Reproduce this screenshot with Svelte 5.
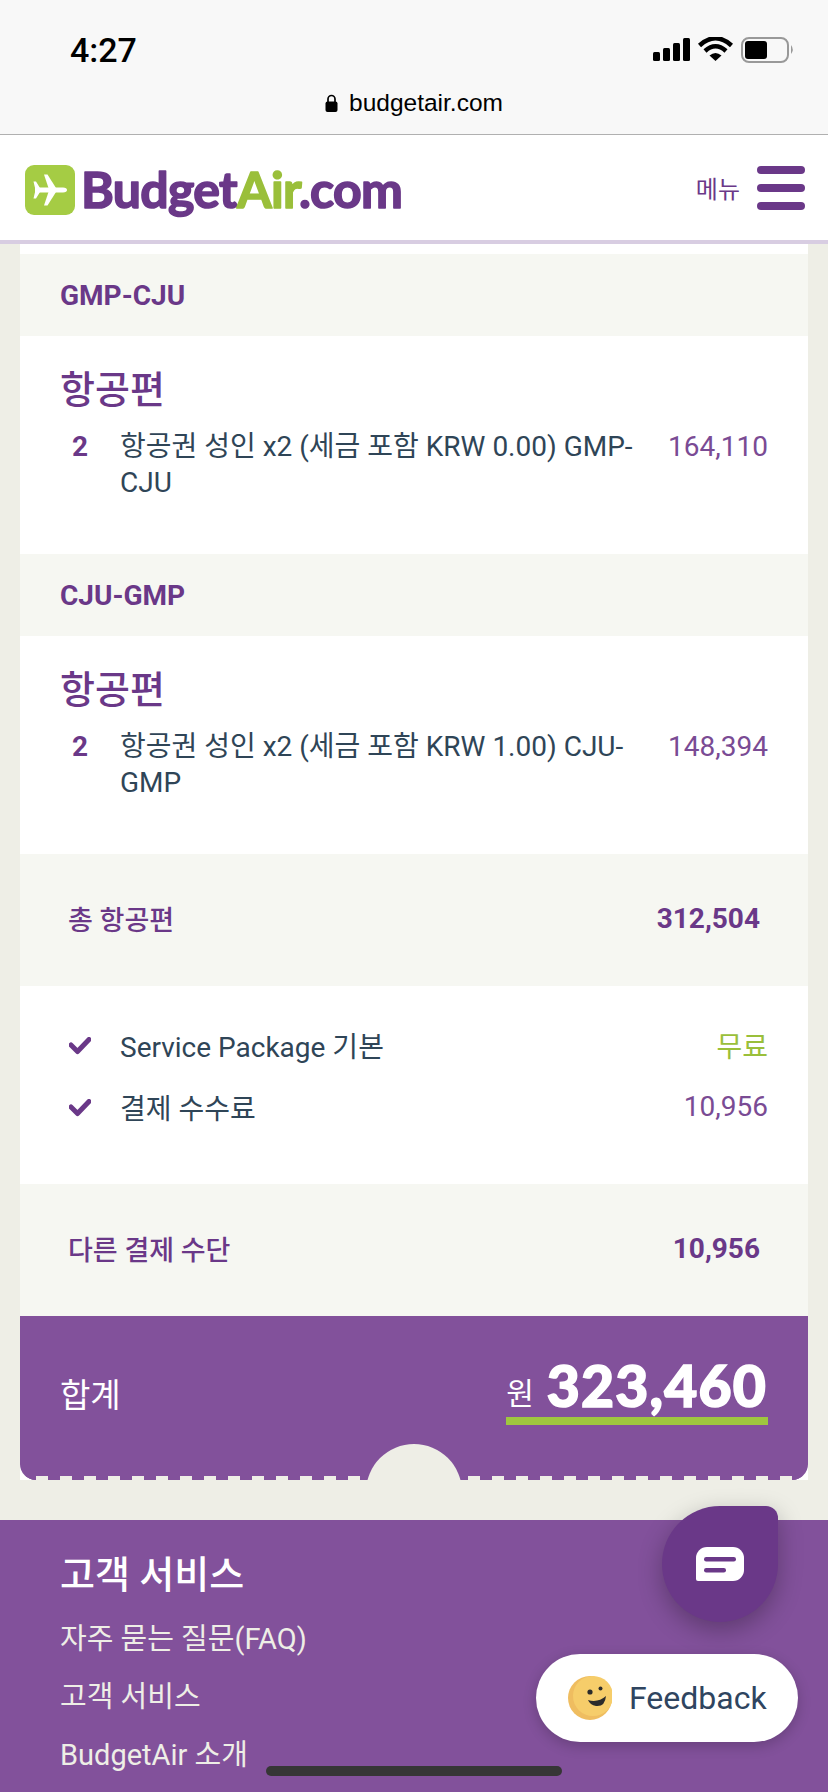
<script lang="ts">
    const legs = [
        { route: "GMP-CJU", text: "항공권 성인 x2 (세금 포함 KRW 0.00) GMP-CJU", price: "164,110" },
        { route: "CJU-GMP", text: "항공권 성인 x2 (세금 포함 KRW 1.00) CJU-GMP", price: "148,394" },
    ];
    const links = ["자주 묻는 질문(FAQ)", "고객 서비스", "BudgetAir 소개"];
</script>

<div class="page">
    <div class="chrome">
        <div class="status">
            <span class="time">4:27</span>
            <svg class="status-icons" width="142" height="26" viewBox="653 37 142 26">
                <rect x="653" y="52" width="7" height="9" rx="1.5" />
                <rect x="663" y="48" width="7" height="13" rx="1.5" />
                <rect x="673" y="43" width="7" height="18" rx="1.5" />
                <rect x="683" y="38" width="7" height="23" rx="1.5" />
                <path d="M699.5 45.5 Q715.5 31 731.5 45.5" class="wifi" />
                <path d="M705 51 Q715.5 41.5 726 51" class="wifi" />
                <path d="M715.5 61 L709.5 55.5 Q715.5 50.5 721.5 55.5 Z" />
                <rect x="742" y="38" width="46" height="24" rx="7" class="batt" />
                <rect x="745" y="41" width="22" height="18" rx="3" />
                <path d="M791 45 Q794.5 49.5 791 54 Z" fill="#999" />
            </svg>
        </div>
        <div class="url">
            <svg width="13" height="18" viewBox="0 0 13 18">
                <path d="M3 8V5a3.5 3.5 0 0 1 7 0v3" fill="none" stroke="#000" stroke-width="1.7" />
                <rect x="0.5" y="7.5" width="12" height="10.5" rx="2" />
            </svg>
            <span>budgetair.com</span>
        </div>
    </div>

    <header>
        <svg class="logo" width="384" height="58" viewBox="25 162 384 58">
            <rect x="25" y="162" width="50" height="50" rx="9" fill="#a5cc44" />
            <g transform="translate(25 162)" fill="#fff">
                <path d="M10 22.5H38Q42 22.8 42 25T38 27.5H10Z" />
                <path d="M8.5 16.5H11L15 23V27L11 33.5H8.5L10.5 25Z" />
                <path d="M19 9.5H22.5L31 23H23.5Z" />
                <path d="M19 40.5H22.5L31 27H23.5Z" />
            </g>
            <text x="81" y="205" textLength="322" class="logo-text"
                >Budget<tspan class="air">Air</tspan>.com</text
            >
        </svg>
        <div class="menu">
            <span>메뉴</span>
            <div class="burger"><i></i><i></i><i></i></div>
        </div>
    </header>

    <main class="card">
        {#each legs as leg}
            <div class="band route">{leg.route}</div>
            <section class="leg">
                <h2>항공편</h2>
                <div class="line">
                    <b>2</b>
                    <p>{leg.text}</p>
                    <span>{leg.price}</span>
                </div>
            </section>
        {/each}

        <div class="band sum">
            <span>총 항공편</span>
            <b>312,504</b>
        </div>

        <section class="extras">
            <div class="extra">
                <svg width="22" height="18" viewBox="0 0 22 18"><path d="M2 8l6.5 6.5L20 2.5" /></svg>
                <p>Service Package 기본</p>
                <span class="free">무료</span>
            </div>
            <div class="extra">
                <svg width="22" height="18" viewBox="0 0 22 18"><path d="M2 8l6.5 6.5L20 2.5" /></svg>
                <p>결제 수수료</p>
                <span>10,956</span>
            </div>
        </section>

        <div class="band sum">
            <span>다른 결제 수단</span>
            <b>10,956</b>
        </div>

        <div class="total">
            <span class="total-label">합계</span>
            <div class="amount">
                <span class="won">원</span>
                <span class="num">323,460</span>
            </div>
        </div>
    </main>

    <footer>
        <h3>고객 서비스</h3>
        {#each links as link}
            <a href="#top">{link}</a>
        {/each}
    </footer>

    <button class="chat" aria-label="chat">
        <svg width="48" height="34" viewBox="0 0 48 34">
            <path d="M11 0H37A11 11 0 0 1 48 11V23A11 11 0 0 1 37 34H2Q0 34 0 32V11A11 11 0 0 1 11 0Z" fill="#fff" />
            <rect x="8" y="10" width="32" height="4.5" rx="2.2" fill="#6a3888" />
            <rect x="8" y="21" width="22" height="4.5" rx="2.2" fill="#6a3888" />
        </svg>
    </button>

    <div class="feedback">
        <svg width="44" height="44" viewBox="0 0 44 44">
            <circle cx="22" cy="22" r="22" fill="#efbd60" />
            <circle cx="25" cy="20" r="20" fill="#f6cd6a" />
            <circle cx="22" cy="16" r="2.6" fill="#2b2b2b" />
            <circle cx="32.5" cy="12.5" r="2" fill="#2b2b2b" />
            <path d="M20 24Q30 27 38 20Q37 31 28 30Q22 29 20 24Z" fill="#2b2b2b" />
        </svg>
        <span>Feedback</span>
    </div>

    <div class="home"></div>
</div>

<style>
    :global(body) {
        background: #eeeee6;
    }

    .page {
        position: relative;
        height: 1792px;
        overflow: hidden;
        background: #eeeee6;
        font-family: Roboto, "Noto Sans CJK KR", sans-serif;
        color: #2f4557;
    }

    .chrome {
        height: 134px;
        background: #f8f8f8;
        border-bottom: 1px solid #b0b0b0;
    }

    .status {
        display: flex;
        justify-content: space-between;
        align-items: center;
        height: 50px;
        padding: 25px 33px 0 70px;
    }

    .time {
        font-size: 34px;
        font-weight: 500;
        color: #000;
    }

    .status-icons {
        fill: #000;
    }

    .wifi {
        fill: none;
        stroke: #000;
        stroke-width: 4.5;
    }

    .batt {
        fill: none;
        stroke: #999;
        stroke-width: 2;
    }

    .url {
        display: flex;
        justify-content: center;
        align-items: center;
        gap: 11px;
        margin-top: 14px;
        font-size: 24.5px;
        color: #000;
        font-family: "Liberation Sans", sans-serif;
    }

    header {
        display: flex;
        justify-content: space-between;
        align-items: center;
        height: 105px;
        padding: 0 23px 0 25px;
        background: #fff;
        border-bottom: 4px solid #d8cde2;
    }

    .logo {
        margin-top: 13px;
    }

    .logo-text {
        font-family: Lato, sans-serif;
        font-size: 50px;
        font-weight: 700;
        fill: #6a3888;
        stroke: #6a3888;
        stroke-width: 1.6;
        stroke-linejoin: round;
    }

    .air {
        fill: #9abf3a;
        stroke: #9abf3a;
    }

    .menu {
        display: flex;
        align-items: center;
        gap: 17px;
        font-size: 24px;
        color: #6a3888;
    }

    .burger {
        display: flex;
        flex-direction: column;
        gap: 10px;
        width: 48px;
    }

    .burger i {
        height: 8px;
        border-radius: 4px;
        background: #6a3888;
    }

    .card {
        margin: 0 20px;
        padding-top: 10px;
        background: #fff;
    }

    .band {
        display: flex;
        align-items: center;
        background: #f6f7f2;
    }

    .route {
        height: 82px;
        padding-left: 40px;
        font-size: 28px;
        font-weight: 700;
        color: #6a3888;
    }

    .leg {
        height: 218px;
        padding: 30px 40px 0 40px;
        box-sizing: border-box;
        background: #fff;
    }

    .leg h2 {
        margin: 0 0 15px;
        font-size: 38px;
        line-height: 48px;
        font-weight: 500;
        color: #6a3888;
    }

    .line {
        display: flex;
        align-items: flex-start;
        font-size: 28px;
        line-height: 36px;
    }

    .line b {
        flex: none;
        width: 60px;
        padding-left: 12px;
        box-sizing: border-box;
        color: #6a3888;
    }

    .line p {
        flex: 1;
        margin: 0;
        padding-right: 30px;
    }

    .line span,
    .extra span {
        color: #7a4b94;
    }

    .sum {
        justify-content: space-between;
        height: 132px;
        padding: 0 48px 4px;
        box-sizing: border-box;
        font-size: 27px;
        font-weight: 500;
        color: #6a3888;
    }

    .sum b {
        font-size: 28px;
    }

    .extras {
        height: 198px;
        padding: 29px 40px 0 49px;
        box-sizing: border-box;
        background: #fff;
    }

    .extra {
        display: flex;
        align-items: center;
        height: 62px;
        font-size: 28px;
    }

    .extra svg {
        flex: none;
        margin-right: 29px;
        fill: none;
        stroke: #6a3888;
        stroke-width: 5;
        stroke-linecap: round;
        stroke-linejoin: round;
    }

    .extra p {
        flex: 1;
        margin: 0 0 3px;
    }

    .extra span {
        margin-bottom: 3px;
    }

    .extra .free {
        color: #9abf3a;
    }

    .total {
        position: relative;
        display: flex;
        justify-content: space-between;
        align-items: flex-start;
        height: 164px;
        padding: 37px 40px 0 40px;
        box-sizing: border-box;
        overflow: hidden;
        background: #82519b;
        border-radius: 0 0 16px 16px;
        color: #fff;
    }

    .total::before {
        content: "";
        position: absolute;
        left: 0;
        right: 0;
        bottom: 0;
        height: 4px;
        background: repeating-linear-gradient(90deg, #eeeee6 0 4px, #82519b 4px 16px, #eeeee6 16px 24px);
    }

    .total::after {
        content: "";
        position: absolute;
        left: 346px;
        top: 128px;
        width: 96px;
        height: 96px;
        border-radius: 50%;
        background: #eeeee6;
    }

    .total-label {
        margin-top: 20px;
        font-size: 33px;
        line-height: 46px;
    }

    .amount {
        display: flex;
        align-items: flex-end;
        gap: 13px;
        height: 64px;
        padding: 0 1px 0 0;
        border-bottom: 8px solid #9fc63f;
    }

    .won {
        font-size: 30px;
        line-height: 46px;
    }

    .num {
        font-family: Lato, sans-serif;
        font-size: 57px;
        font-weight: 900;
        line-height: 64px;
        letter-spacing: 1.2px;
        -webkit-text-stroke: 1.6px #fff;
    }

    footer {
        display: flex;
        flex-direction: column;
        margin-top: 40px;
        padding: 30px 60px 0;
        height: 272px;
        box-sizing: border-box;
        background: #82519b;
        color: #eeeee6;
    }

    footer h3 {
        margin: 0 0 10px;
        font-size: 38px;
        line-height: 50px;
        font-weight: 500;
        color: #fff;
    }

    footer a {
        height: 58px;
        font-size: 29px;
        line-height: 58px;
        color: inherit;
        text-decoration: none;
    }

    .chat {
        position: absolute;
        left: 662px;
        top: 1506px;
        display: flex;
        align-items: center;
        justify-content: center;
        width: 116px;
        height: 116px;
        padding: 0;
        border: 0;
        border-radius: 58px 12px 58px 58px;
        background: #6a3888;
        box-shadow: 0 8px 24px rgba(0, 0, 0, 0.28);
    }

    .feedback {
        position: absolute;
        left: 536px;
        top: 1654px;
        display: flex;
        align-items: center;
        gap: 17px;
        width: 262px;
        height: 88px;
        padding-left: 32px;
        box-sizing: border-box;
        border-radius: 44px;
        background: #fff;
        box-shadow: 0 4px 14px rgba(0, 0, 0, 0.2);
        font-size: 32px;
        color: #2f4560;
    }

    .home {
        position: absolute;
        left: 266px;
        top: 1766px;
        width: 296px;
        height: 10px;
        border-radius: 5px;
        background: #363636;
    }
</style>
